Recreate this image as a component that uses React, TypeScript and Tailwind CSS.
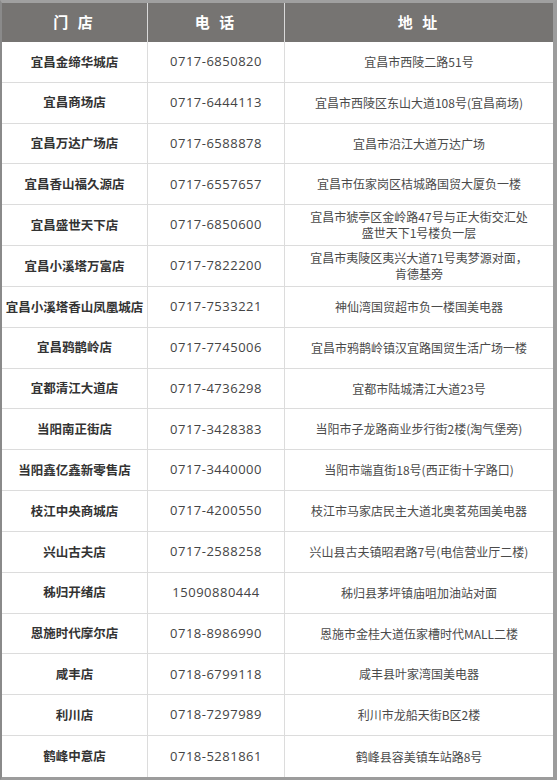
import React from "react";

type Row = { name: string; phone: string; addr: React.ReactNode };

const rows: Row[] = [
  { name: "宜昌金缔华城店", phone: "0717-6850820", addr: "宜昌市西陵二路51号" },
  { name: "宜昌商场店", phone: "0717-6444113", addr: "宜昌市西陵区东山大道108号(宜昌商场)" },
  { name: "宜昌万达广场店", phone: "0717-6588878", addr: "宜昌市沿江大道万达广场" },
  { name: "宜昌香山福久源店", phone: "0717-6557657", addr: "宜昌市伍家岗区桔城路国贸大厦负一楼" },
  {
    name: "宜昌盛世天下店",
    phone: "0717-6850600",
    addr: (
      <>
        <span className="block">宜昌市猇亭区金岭路47号与正大街交汇处</span>
        <span className="block">盛世天下1号楼负一层</span>
      </>
    ),
  },
  {
    name: "宜昌小溪塔万富店",
    phone: "0717-7822200",
    addr: (
      <>
        <span className="block">宜昌市夷陵区夷兴大道71号夷梦源对面，</span>
        <span className="block">肯德基旁</span>
      </>
    ),
  },
  { name: "宜昌小溪塔香山凤凰城店", phone: "0717-7533221", addr: "神仙湾国贸超市负一楼国美电器" },
  { name: "宜昌鸦鹊岭店", phone: "0717-7745006", addr: "宜昌市鸦鹊岭镇汉宜路国贸生活广场一楼" },
  { name: "宜都清江大道店", phone: "0717-4736298", addr: "宜都市陆城清江大道23号" },
  { name: "当阳南正街店", phone: "0717-3428383", addr: "当阳市子龙路商业步行街2楼(淘气堡旁)" },
  { name: "当阳鑫亿鑫新零售店", phone: "0717-3440000", addr: "当阳市端直街18号(西正街十字路口)" },
  { name: "枝江中央商城店", phone: "0717-4200550", addr: "枝江市马家店民主大道北奥茗苑国美电器" },
  { name: "兴山古夫店", phone: "0717-2588258", addr: "兴山县古夫镇昭君路7号(电信营业厅二楼)" },
  { name: "秭归开绪店", phone: "15090880444", addr: "秭归县茅坪镇庙咀加油站对面" },
  { name: "恩施时代摩尔店", phone: "0718-8986990", addr: "恩施市金桂大道伍家槽时代MALL二楼" },
  { name: "咸丰店", phone: "0718-6799118", addr: "咸丰县叶家湾国美电器" },
  { name: "利川店", phone: "0718-7297989", addr: "利川市龙船天街B区2楼" },
  { name: "鹤峰中意店", phone: "0718-5281861", addr: "鹤峰县容美镇车站路8号" },
];

const cjk = "font-['Noto_Sans_CJK_SC','Noto_Sans',sans-serif]";

export default function App() {
  return (
    <div className="w-[557px] h-[780px] bg-white box-border border-l-2 border-t-[3px] border-r-4 border-b-[3px] border-l-[#8a8a8a] border-t-[#a0a0a0] border-r-[#9c9c9c] border-b-[#9c9c9c]">
      <div className="grid h-full grid-cols-[146px_137px_1fr] grid-rows-[39px_repeat(18,1fr)]">
        {["门 店", "电 话", "地 址"].map((h, i) => (
          <div
            key={h}
            className={`flex items-center justify-center bg-[#767472] text-white text-[15px] font-bold tracking-[3px] whitespace-pre ${cjk} ${
              i < 2 ? "border-r border-r-[#d9d9d9]" : ""
            }`}
          >
            {h}
          </div>
        ))}
        {rows.map((r, idx) => {
          const last = idx === rows.length - 1;
          const bb = last ? "" : "border-b border-b-[#dcdcdc]";
          return (
            <React.Fragment key={r.name}>
              <div
                className={`flex items-center justify-center border-r border-r-[#dcdcdc] ${bb} text-[12.5px] font-bold text-[#333] ${cjk}`}
              >
                {r.name}
              </div>
              <div
                className={`flex items-center justify-center border-r border-r-[#dcdcdc] ${bb} text-[13px] tracking-[0.5px] text-[#444] font-['Open_Sans','Noto_Sans',sans-serif]`}
              >
                {r.phone}
              </div>
              <div
                className={`flex flex-col items-center justify-center text-center ${bb} text-[12px] leading-[16px] text-[#4a4a4a] ${cjk}`}
              >
                {r.addr}
              </div>
            </React.Fragment>
          );
        })}
      </div>
    </div>
  );
}
